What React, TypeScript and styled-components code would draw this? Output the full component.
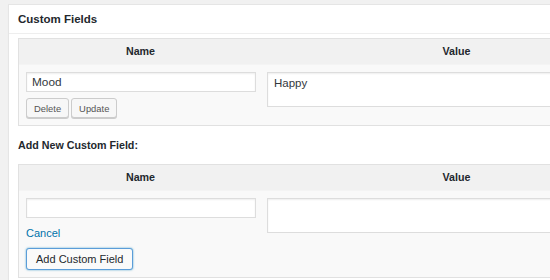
import styled, { createGlobalStyle } from "styled-components";

const GlobalStyle = createGlobalStyle`
   html, body {
      margin: 0;
      padding: 0;
      background: #f1f1f1;
      overflow: hidden;
      font-family: "Liberation Sans", Arial, sans-serif;
      color: #23282d;
   }
`;

const Panel = styled.div`
   margin: 4px 0 0 8px;
   width: 652px;
   background: #fff;
   border: 1px solid #e5e5e5;
   border-right: none;
   box-shadow: 0 1px 1px rgba(0, 0, 0, 0.04);
`;

const PanelHeader = styled.h2`
   margin: 0;
   height: 28px;
   line-height: 28px;
   padding: 0 9px;
   font-size: 11.5px;
   font-weight: 700;
   border-bottom: 1px solid #eee;
`;

const PanelBody = styled.div`
   padding: 4px 9px 12px 9px;
`;

const FieldTable = styled.div`
   display: grid;
   grid-template-columns: 243px 1fr;
   border: 1px solid #e1e1e1;
   background: #f9f9f9;
`;

const HeadCell = styled.div`
   height: 25px;
   line-height: 25px;
   background: #f1f1f1;
   text-align: center;
   font-size: 10.7px;
   font-weight: 700;
   border-bottom: 1px solid #f4f4f4;
`;

const NameCell = styled.div`
   display: flex;
   flex-direction: column;
   align-items: flex-start;
   padding: 7px 6px 7px 7px;
`;

const ValueCell = styled.div`
   padding: 7px 0 0 5px;
`;

const TextInput = styled.input`
   box-sizing: border-box;
   width: 230px;
   height: 20px;
   padding: 0 5px;
   border: 1px solid #ddd;
   box-shadow: inset 0 1px 2px rgba(0, 0, 0, 0.07);
   background: #fff;
   font-family: inherit;
   font-size: 11.8px;
   color: #32373c;
   outline: none;
`;

const ValueArea = styled.textarea`
   box-sizing: border-box;
   display: block;
   width: 100%;
   height: 35px;
   padding: 3px 6px 2px;
   border: 1px solid #ddd;
   border-right: none;
   box-shadow: inset 0 1px 2px rgba(0, 0, 0, 0.07);
   background: #fff;
   font-family: inherit;
   font-size: 11.5px;
   line-height: 14px;
   color: #32373c;
   resize: none;
   outline: none;
`;

const ButtonRow = styled.div`
   display: flex;
   gap: 2px;
   margin-top: 6px;
`;

const SmallButton = styled.button`
   height: 20px;
   padding: 0 7px;
   border: 1px solid #ccc;
   border-radius: 3px;
   background: #f7f7f7;
   box-shadow: 0 1px 0 #ccc;
   font-family: inherit;
   font-size: 9.4px;
   color: #555;
   cursor: pointer;
`;

const CancelLink = styled.a`
   margin-top: 7px;
   font-size: 11px;
   line-height: 16px;
   color: #0073aa;
   text-decoration: none;
   cursor: pointer;
`;

const AddButton = styled.button`
   margin-top: 7px;
   height: 22px;
   padding: 0 9px;
   border: 1px solid #5b9dd9;
   border-radius: 3px;
   background: #fafafa;
   box-shadow: 0 0 2px rgba(30, 140, 190, 0.8);
   font-family: inherit;
   font-size: 11px;
   color: #23282d;
   cursor: pointer;
`;

const SubHeading = styled.p`
   margin: 11px 0 11px;
   font-size: 10.7px;
   line-height: 16px;
   font-weight: 700;
`;

export default function App() {
   return (
      <>
         <GlobalStyle />
         <Panel>
            <PanelHeader>Custom Fields</PanelHeader>
            <PanelBody>
               <FieldTable>
                  <HeadCell>Name</HeadCell>
                  <HeadCell>Value</HeadCell>
                  <NameCell>
                     <TextInput defaultValue="Mood" />
                     <ButtonRow>
                        <SmallButton>Delete</SmallButton>
                        <SmallButton>Update</SmallButton>
                     </ButtonRow>
                  </NameCell>
                  <ValueCell>
                     <ValueArea defaultValue="Happy" />
                  </ValueCell>
               </FieldTable>

               <SubHeading>Add New Custom Field:</SubHeading>

               <FieldTable>
                  <HeadCell>Name</HeadCell>
                  <HeadCell>Value</HeadCell>
                  <NameCell>
                     <TextInput />
                     <CancelLink>Cancel</CancelLink>
                     <AddButton>Add Custom Field</AddButton>
                  </NameCell>
                  <ValueCell>
                     <ValueArea />
                  </ValueCell>
               </FieldTable>
            </PanelBody>
         </Panel>
      </>
   );
}
